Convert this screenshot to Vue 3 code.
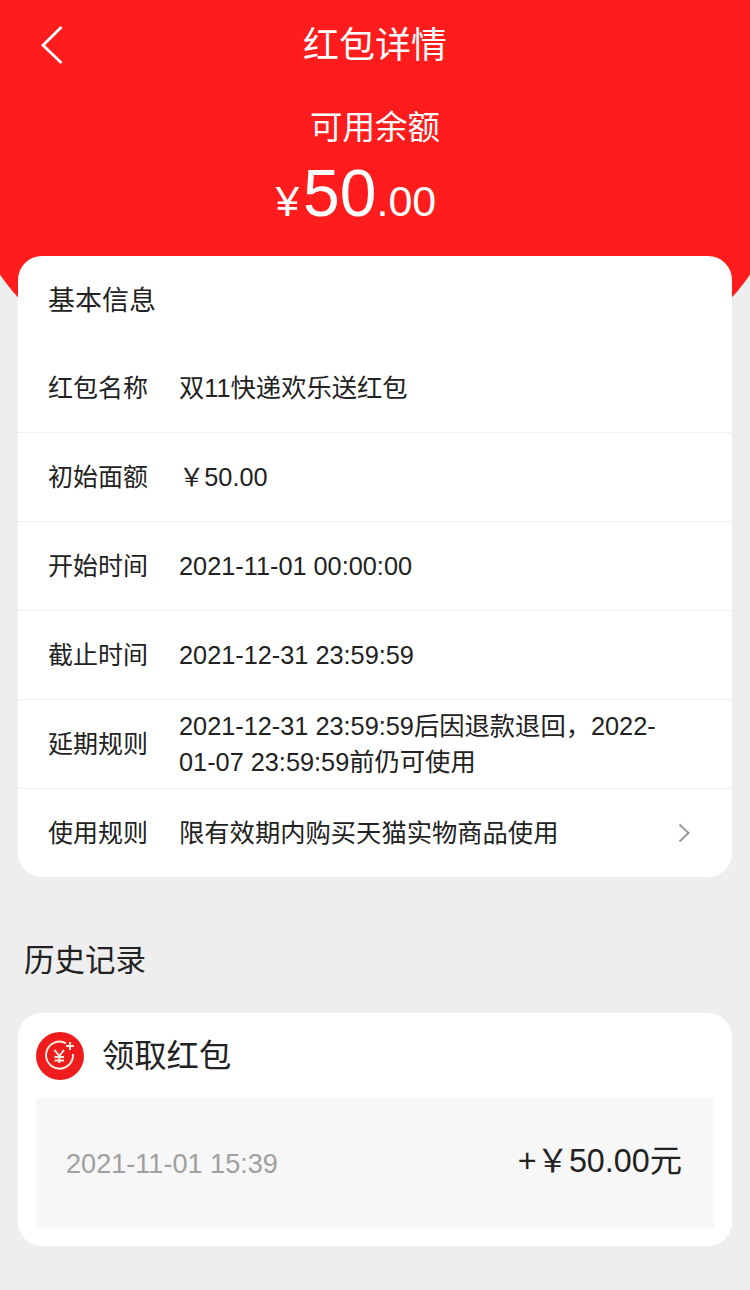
<script setup>
const rows = [
  { label: '红包名称', value: '双11快递欢乐送红包' },
  { label: '初始面额', value: '￥50.00' },
  { label: '开始时间', value: '2021-11-01 00:00:00' },
  { label: '截止时间', value: '2021-12-31 23:59:59' },
  { label: '延期规则', value: '2021-12-31 23:59:59后因退款退回，2022-01-07 23:59:59前仍可使用' },
  { label: '使用规则', value: '限有效期内购买天猫实物商品使用', arrow: true }
]
</script>

<template>
  <div class="page">
    <div class="hero">
      <div class="nav">
        <svg class="back" width="24" height="38" viewBox="0 0 24 38">
          <path d="M22.500 1 L4 19.200 L22.500 37" fill="none" stroke="#fff" stroke-width="2.800" />
        </svg>
        <span class="nav-title">红包详情</span>
      </div>
      <div class="balance-label">可用余额</div>
      <div class="balance">
        <span class="yen">¥</span><span class="big">50</span><span class="small">.00</span>
      </div>
    </div>

    <div class="card info">
      <div class="info-title">基本信息</div>
      <div v-for="row in rows" :key="row.label" class="row">
        <span class="row-label">{{ row.label }}</span>
        <span class="row-value">{{ row.value }}</span>
        <svg v-if="row.arrow" class="arrow" width="14" height="20" viewBox="0 0 14 20">
          <path d="M1.500 1.500 L10.500 10 L1.500 18.500" fill="none" stroke="#999" stroke-width="2" />
        </svg>
      </div>
    </div>

    <div class="history-title">历史记录</div>

    <div class="card history">
      <div class="history-head">
        <svg width="48" height="48" viewBox="0 0 48 48">
          <circle cx="24" cy="24" r="24" fill="#ee1c1c" />
          <path d="M30 11.300 A13.500 13.500 0 1 0 37 22" fill="none" stroke="#ffeedd" stroke-width="2" />
          <path d="M34 10 V18 M30 14 H38" stroke="#ffeedd" stroke-width="2" />
          <path d="M18.500 18 L23.300 24 L28 18 M23.300 24 V31 M18.500 25 H28 M18.500 28.500 H28" fill="none" stroke="#ffeedd" stroke-width="2" />
        </svg>
        <span class="history-name">领取红包</span>
      </div>
      <div class="history-body">
        <span class="history-time">2021-11-01 15:39</span>
        <span class="history-amount">+￥50.00元</span>
      </div>
    </div>
  </div>
</template>

<style>
body {
  background: #eeeeee;
}
</style>

<style scoped>
.page {
  position: relative;
  width: 750px;
  height: 1290px;
  overflow: hidden;
  background: #eeeeee;
  font-family: "Liberation Sans", "Noto Sans CJK SC", sans-serif;
  color: #222;
}

.hero {
  position: relative;
  height: 256px;
  color: #fff;
  text-align: center;
}

/* 紅色弧形背景，比畫面寬，左右邊緣才會是斜的 */
.hero::before {
  content: "";
  position: absolute;
  left: -25px;
  top: 0;
  width: 800px;
  height: 420px;
  background: #ff1c1c;
  border-radius: 0 0 400px 400px / 0 0 223px 223px;
}

.nav,
.balance-label,
.balance {
  position: relative;
}

.nav {
  height: 90px;
  padding-top: 2px;
  box-sizing: border-box;
  display: flex;
  align-items: center;
  justify-content: center;
}

.back {
  position: absolute;
  left: 39px;
  top: 26px;
}

.nav-title {
  font-size: 36px;
  line-height: 88px;
}

.balance-label {
  margin-top: 17px;
  font-size: 32.500px;
  line-height: 42px;
}

.balance {
  margin-top: 8px;
  padding-right: 38px;
  line-height: 72px;
  display: flex;
  align-items: baseline;
  justify-content: center;
}

.yen {
  font-size: 42px;
  margin-right: 4px;
}

.big {
  font-size: 66px;
}

.small {
  font-size: 43px;
}

.card {
  position: relative;
  margin: 0 18px;
  background: #fff;
  border-radius: 24px;
}

.info-title {
  height: 88px;
  padding-left: 30px;
  font-size: 27px;
  line-height: 90px;
}

.row {
  height: 89px;
  padding: 0 30px;
  display: flex;
  align-items: center;
  font-size: 25px;
  border-bottom: 1px solid #f0f0f0;
  box-sizing: border-box;
}

.row:last-child {
  height: 88px;
  border-bottom: none;
}

.row-label {
  flex: none;
  width: 131px;
  line-height: 36px;
}

.row-value {
  flex: 1;
  max-width: 495px;
  font-size: 25.300px;
  line-height: 36px;
}

.arrow {
  flex: none;
  margin-left: auto;
  margin-right: 10px;
}

.history-title {
  margin: 60px 0 0 24px;
  height: 46px;
  font-size: 30.500px;
  line-height: 46px;
}

.history {
  margin-top: 30px;
  height: 233px;
  padding: 19px 18px 0;
  box-sizing: border-box;
}

.history-head {
  height: 48px;
  margin-bottom: 18px;
  display: flex;
  align-items: center;
  gap: 18px;
}

.history-head svg {
  flex: none;
}

.history-name {
  font-size: 32.300px;
  line-height: 48px;
}

.history-body {
  height: 130px;
  padding: 0 32px 0 30px;
  display: flex;
  align-items: center;
  justify-content: space-between;
  background: #f7f7f7;
}

.history-time {
  font-size: 27.100px;
  color: #a0a0a0;
  margin-top: 2px;
}

.history-amount {
  font-size: 32.300px;
  line-height: 40px;
  margin-bottom: 4px;
}
</style>
